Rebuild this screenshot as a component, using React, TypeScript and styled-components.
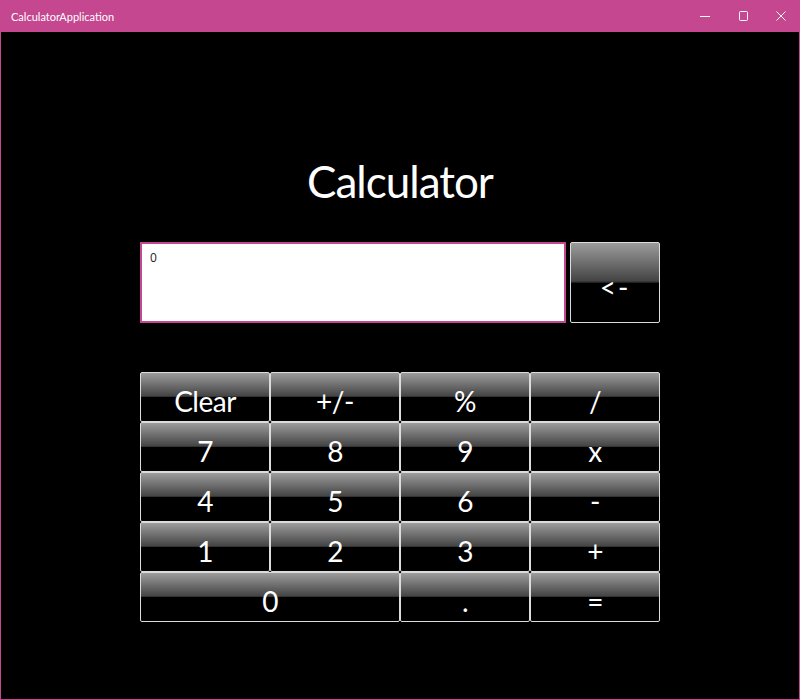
import React from "react";
import styled, { createGlobalStyle } from "styled-components";

const Global = createGlobalStyle`
  html, body { margin: 0; padding: 0; background: #000; }
  #root { width: 800px; height: 700px; }
`;

const Window = styled.div`
  width: 800px;
  height: 700px;
  box-sizing: border-box;
  border: 1px solid #c4478f;
  border-top: none;
  display: flex;
  flex-direction: column;
  background: #000;
  font-family: Lato, "Open Sans", sans-serif;
`;

const TitleBar = styled.div`
  height: 32px;
  flex: none;
  background: #c4478f;
  display: flex;
  align-items: center;
  justify-content: space-between;
  padding-left: 11px;
  margin: 0 -1px;
`;

const TitleText = styled.span`
  color: #fff;
  font-size: 11px;
  font-family: Lato, "Open Sans", sans-serif;
`;

const Controls = styled.div`
  display: flex;
  height: 32px;
`;

const Ctrl = styled.div`
  width: 38px;
  height: 32px;
  display: flex;
  align-items: center;
  justify-content: center;
`;

const Content = styled.div`
  flex: 1;
  display: flex;
  flex-direction: column;
  align-items: center;
`;

const Heading = styled.h1`
  margin: 119px 0 0;
  height: 60px;
  line-height: 60px;
  font-size: 44px;
  font-weight: 400;
  letter-spacing: -1px;
  color: #fff;
`;

const DisplayRow = styled.div`
  margin-top: 31px;
  width: 520px;
  height: 81px;
  display: flex;
  gap: 4px;
`;

const Display = styled.div`
  flex: 1;
  box-sizing: border-box;
  background: #fff;
  border: 2px solid #c4478f;
  padding: 6px 8px;
  font-family: "Open Sans", sans-serif;
  font-size: 12px;
  color: #222;
  line-height: 16px;
`;

const Key = styled.button<{ $span?: number }>`
  grid-column: span ${(p) => p.$span ?? 1};
  box-sizing: border-box;
  border: 1px solid #dcdcdc;
  border-radius: 2px;
  background: linear-gradient(
    to bottom,
    #9c9c9c 0%,
    #444 48%,
    #222 50%,
    #000 51%,
    #000 100%
  );
  color: #fff;
  font-family: Lato, "Open Sans", sans-serif;
  font-size: 28px;
  letter-spacing: -0.5px;
  font-weight: 400;
  padding: 7px 0 0;
  margin: 0;
  display: flex;
  align-items: center;
  justify-content: center;
  line-height: 1;
  cursor: pointer;
`;

const BackKey = styled(Key)`
  width: 90px;
  height: 81px;
  padding-top: 9px;
  font-size: 28px;
  letter-spacing: 2px;
`;

const Pad = styled.div`
  margin-top: 49px;
  width: 520px;
  display: grid;
  grid-template-columns: repeat(4, 130px);
  grid-auto-rows: 50px;
`;

const keys: { label: string; span?: number }[] = [
  { label: "Clear" }, { label: "+/-" }, { label: "%" }, { label: "/" },
  { label: "7" }, { label: "8" }, { label: "9" }, { label: "x" },
  { label: "4" }, { label: "5" }, { label: "6" }, { label: "-" },
  { label: "1" }, { label: "2" }, { label: "3" }, { label: "+" },
  { label: "0", span: 2 }, { label: "." }, { label: "=" },
];

export default function App() {
  return (
    <>
      <Global />
      <Window>
        <TitleBar>
          <TitleText>CalculatorApplication</TitleText>
          <Controls>
            <Ctrl>
              <svg width="12" height="12" viewBox="0 0 12 12">
                <line x1="1" y1="6.5" x2="11" y2="6.5" stroke="#fff" strokeWidth="1" />
              </svg>
            </Ctrl>
            <Ctrl>
              <svg width="12" height="12" viewBox="0 0 12 12">
                <rect x="2.5" y="1.5" width="8" height="9" rx="1" fill="none" stroke="#fff" strokeWidth="1" />
              </svg>
            </Ctrl>
            <Ctrl>
              <svg width="12" height="12" viewBox="0 0 12 12">
                <path d="M1.5 1.5 L10.5 10.5 M10.5 1.5 L1.5 10.5" stroke="#fff" strokeWidth="1" />
              </svg>
            </Ctrl>
          </Controls>
        </TitleBar>
        <Content>
          <Heading>Calculator</Heading>
          <DisplayRow>
            <Display>0</Display>
            <BackKey>&lt;-</BackKey>
          </DisplayRow>
          <Pad>
            {keys.map((k) => (
              <Key key={k.label} $span={k.span}>
                {k.label}
              </Key>
            ))}
          </Pad>
        </Content>
      </Window>
    </>
  );
}
